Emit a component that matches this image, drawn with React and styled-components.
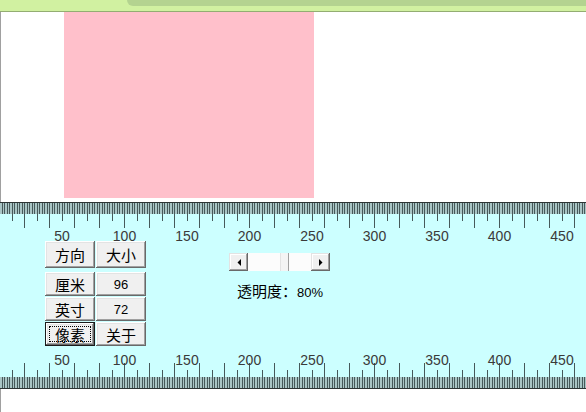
import React from "react";
import styled, { createGlobalStyle } from "styled-components";

const ORIGIN = -0.5;
const UNIT = 1.25;
const WIDTH = 586;

const GlobalStyle = createGlobalStyle`
  html, body {
    margin: 0;
    padding: 0;
    background: #ffffff;
  }
`;

function tickList() {
  const ticks = [];
  for (let u = 0; u * UNIT + ORIGIN < WIDTH; u += 2) {
    const x = Math.floor(ORIGIN + u * UNIT);
    const kind = u % 20 === 0 ? "tall" : u % 10 === 0 ? "mid" : "small";
    ticks.push({ u, x, kind });
  }
  return ticks;
}

const labels = [50, 100, 150, 200, 250, 300, 350, 400, 450];
const tickLen = { tall: 25, mid: 18, small: 11 };

function Scale({ bottom }) {
  const ticks = tickList();
  const h = bottom ? 36 : 39;
  return (
    <ScaleSvg width={WIDTH} height={h}>
      {bottom ? (
        <>
          <rect x="0" y="24" width={WIDTH} height="11" fill="#a9c5c5" />
          <rect x="0" y="35" width={WIDTH} height="1" fill="#2c3434" />
          {ticks.map(t => (
            <rect
              key={t.u}
              x={t.x}
              y={35 - tickLen[t.kind]}
              width="1"
              height={tickLen[t.kind]}
              fill="#46595a"
            />
          ))}
          {labels.map(l => (
            <ScaleLabel key={l} x={ORIGIN + l * UNIT} y="12" textAnchor="middle">
              {l}
            </ScaleLabel>
          ))}
        </>
      ) : (
        <>
          <rect x="0" y="0" width={WIDTH} height="1" fill="#2c3434" />
          <rect x="0" y="1" width={WIDTH} height="11" fill="#a9c5c5" />
          {ticks.map(t => (
            <rect key={t.u} x={t.x} y="1" width="1" height={tickLen[t.kind]} fill="#46595a" />
          ))}
          {labels.map(l => (
            <ScaleLabel key={l} x={ORIGIN + l * UNIT} y="39" textAnchor="middle">
              {l}
            </ScaleLabel>
          ))}
        </>
      )}
    </ScaleSvg>
  );
}

function ArrowIcon({ dir }) {
  return (
    <svg width="4" height="7" viewBox="0 0 4 7">
      {dir === "left" ? (
        <path d="M4 0 L4 7 L0.5 3.5 Z" fill="#000" />
      ) : (
        <path d="M0 0 L0 7 L3.5 3.5 Z" fill="#000" />
      )}
    </svg>
  );
}

export default function App() {
  return (
    <>
      <GlobalStyle />
      <Frame>
        <TitleStrip>
          <TitleTab />
        </TitleStrip>
        <Canvas>
          <Swatch />
        </Canvas>
        <Ruler>
          <Scale />
          <Controls>
            <ButtonGrid>
              <ButtonRow $tall>
                <Button>方向</Button>
                <Button>大小</Button>
              </ButtonRow>
              <ButtonRow>
                <Button>厘米</Button>
                <Button $num>96</Button>
              </ButtonRow>
              <ButtonRow>
                <Button>英寸</Button>
                <Button $num>72</Button>
              </ButtonRow>
              <ButtonRow>
                <Button $default>
                  <Focus>像素</Focus>
                </Button>
                <Button>关于</Button>
              </ButtonRow>
            </ButtonGrid>
            <OpacityBox>
              <ScrollBar>
                <ArrowButton>
                  <ArrowIcon dir="left" />
                </ArrowButton>
                <Track>
                  <Thumb />
                </Track>
                <ArrowButton>
                  <ArrowIcon dir="right" />
                </ArrowButton>
              </ScrollBar>
              <Caption>
                透明度：<Num>80%</Num>
              </Caption>
            </OpacityBox>
          </Controls>
          <Scale bottom />
        </Ruler>
        <Footer />
      </Frame>
    </>
  );
}

const Frame = styled.div`
  width: ${WIDTH}px;
  height: 412px;
  display: flex;
  flex-direction: column;
  overflow: hidden;
  background: #ffffff;
`;

const TitleStrip = styled.div`
  height: 11px;
  background: #d1f1a1;
  border-bottom: 1px solid #93ad72;
  display: flex;
  align-items: flex-start;
`;

const TitleTab = styled.div`
  margin-left: 127px;
  flex: 1;
  height: 6px;
  background: #b4d390;
  border-bottom-left-radius: 7px;
`;

const Canvas = styled.div`
  height: 190px;
  border-left: 1px solid #a0a0a0;
  padding-left: 63px;
`;

const Swatch = styled.div`
  width: 250px;
  height: 186px;
  background: #ffc0cb;
`;

const Ruler = styled.div`
  height: 187px;
  background: #ccffff;
  display: flex;
  flex-direction: column;
`;

const ScaleSvg = styled.svg`
  display: block;
  overflow: visible;
  flex: none;
`;

const ScaleLabel = styled.text`
  font-family: "Liberation Sans", Arial, sans-serif;
  font-size: 14px;
  fill: #3a3a3a;
`;

const Controls = styled.div`
  height: 112px;
  display: flex;
  align-items: flex-start;
  padding-left: 45px;
`;

const ButtonGrid = styled.div`
  display: flex;
  flex-direction: column;
  gap: 1px;
`;

const ButtonRow = styled.div`
  display: flex;
  gap: 1px;
  height: ${p => (p.$tall ? 27 : 24)}px;
  margin-bottom: ${p => (p.$tall ? 3 : 0)}px;
`;

const Button = styled.div`
  width: 50px;
  box-sizing: border-box;
  display: flex;
  align-items: center;
  justify-content: center;
  background: #f0f0f0;
  color: #000;
  font-family: ${p =>
    p.$num
      ? `"Liberation Sans", Arial, sans-serif`
      : `"Noto Sans CJK SC", sans-serif`};
  font-size: ${p => (p.$num ? 13 : 15)}px;
  border: ${p => (p.$default ? "1px solid #1a1a1a" : "none")};
  box-shadow: inset -1px -1px #696969, inset 1px 1px #ffffff,
    inset -2px -2px #a0a0a0, inset 2px 2px #e3e3e3;
`;

const Focus = styled.span`
  flex: 1;
  align-self: stretch;
  margin: 3px;
  border: 1px dotted #000;
  display: flex;
  align-items: center;
  justify-content: center;
`;

const OpacityBox = styled.div`
  margin-left: 83px;
  margin-top: 12px;
  display: flex;
  flex-direction: column;
`;

const ScrollBar = styled.div`
  width: 101px;
  height: 18px;
  display: flex;
  background: #ffffff;
`;

const ArrowButton = styled.div`
  width: 19px;
  display: flex;
  align-items: center;
  justify-content: center;
  background: #f0f0f0;
  box-shadow: inset -1px -1px #696969, inset 1px 1px #e3e3e3,
    inset -2px -2px #a0a0a0, inset 2px 2px #ffffff;
`;

const Track = styled.div`
  flex: 1;
  display: flex;
  padding-left: 32px;
  background: #fcfcfc;
`;

const Thumb = styled.div`
  width: 9px;
  background: #f4f4f4;
  box-shadow: inset -1px 0 #a0a0a0, inset 1px 0 #e3e3e3;
`;

const Caption = styled.div`
  margin-top: 11px;
  margin-left: 8px;
  font-family: "Noto Sans CJK SC", sans-serif;
  font-size: 15px;
  line-height: 18px;
  color: #000;
`;

const Num = styled.span`
  font-family: "Liberation Sans", Arial, sans-serif;
  font-size: 13px;
`;

const Footer = styled.div`
  flex: 1;
  border-left: 1px solid #a0a0a0;
`;
